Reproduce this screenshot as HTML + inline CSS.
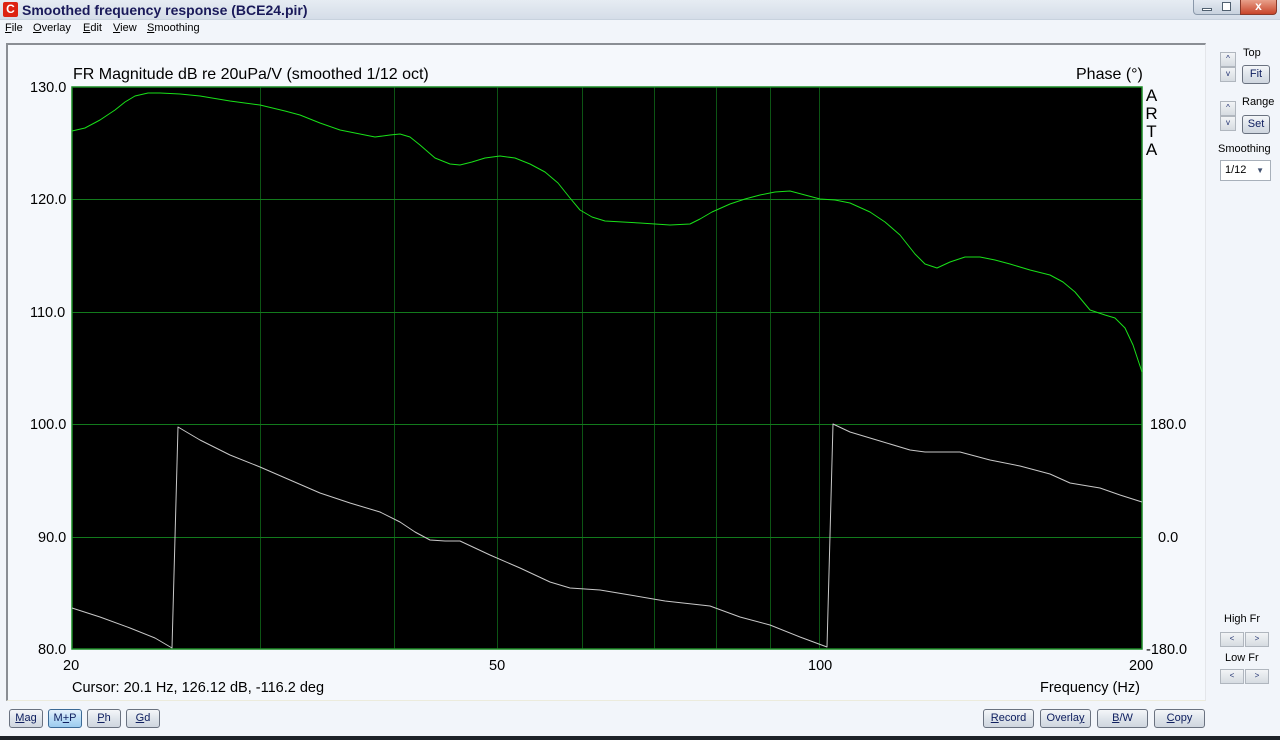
<!DOCTYPE html>
<html><head><meta charset="utf-8"><style>
*{margin:0;padding:0;box-sizing:border-box}
body{width:1280px;height:740px;background:#f2f5fa;font-family:"Liberation Sans",sans-serif;position:relative;overflow:hidden}
.a{position:absolute;white-space:nowrap}
.btn{position:absolute;height:19px;border:1px solid #6a7280;border-radius:3px;background:linear-gradient(#f4f6f9,#dde3ea 55%,#cfd6df);font-size:11px;color:#102060;text-align:center;line-height:17px}
.btnb{background:linear-gradient(#e6f2fc,#b8dcf6 55%,#9ccbee);border-color:#3c6a96}
.spin{position:absolute;width:16px;height:15px;border:1px solid #b0b6be;background:linear-gradient(#f2f4f6,#d6dbe1);font-size:8px;color:#203070;text-align:center;line-height:12px}
.lbl{font-size:14.5px;color:#000}
.big{font-size:16px;color:#000}
.sm{font-size:11px;color:#000}
</style></head><body>
<div class="a" style="left:0;top:0;width:1280px;height:19px;background:linear-gradient(#e6ecf3,#d5dde8)"></div>
<div class="a" style="left:3px;top:2px;width:15px;height:15px;background:#d21;border-radius:2px;color:#fff;font-size:12px;font-weight:bold;line-height:15px;text-align:center">C</div>
<div class="a" style="left:22px;top:2px;font-size:14px;font-weight:bold;color:#1a1a5a">Smoothed frequency response (BCE24.pir)</div>
<div class="a" style="left:1193px;top:0;width:48px;height:15px;border:1px solid #8a98aa;border-top:none;border-radius:0 0 0 4px;background:linear-gradient(#e4eaf2,#c8d2de)"></div>
<div class="a" style="left:1202px;top:8px;width:10px;height:3px;border:1px solid #506070;background:#fff"></div>
<div class="a" style="left:1222px;top:2px;width:9px;height:9px;border:1px solid #506070;background:#fff"></div>
<div class="a" style="left:1240px;top:0;width:37px;height:15px;border:1px solid #8a3a2a;border-top:none;border-radius:0 0 4px 0;background:linear-gradient(#e8a08a,#c8452a);color:#fff;font-size:12px;font-weight:bold;text-align:center;line-height:13px">x</div>
<div class="a" style="left:0;top:19px;width:1280px;height:1px;background:#c8d2de"></div>
<div class="a sm" style="left:5px;top:22px"><u>F</u>ile</div>
<div class="a sm" style="left:33px;top:22px"><u>O</u>verlay</div>
<div class="a sm" style="left:83px;top:22px"><u>E</u>dit</div>
<div class="a sm" style="left:113px;top:22px"><u>V</u>iew</div>
<div class="a sm" style="left:147px;top:22px"><u>S</u>moothing</div>
<div class="a" style="left:6px;top:43px;width:1200px;height:658px;border-left:2px solid #8a8e94;border-top:2px solid #8a8e94;border-right:1px solid #e4e6ea;border-bottom:1px solid #ecebdc;background:#f5f8fc"></div>
<svg class="a" style="left:0;top:0" width="1280" height="740">
<rect x="72" y="87" width="1070" height="562" fill="#000"/>
<g stroke="#0c5414" stroke-width="1">
<line x1="260.5" y1="87" x2="260.5" y2="649"/><line x1="394.5" y1="87" x2="394.5" y2="649"/><line x1="497.5" y1="87" x2="497.5" y2="649"/><line x1="582.5" y1="87" x2="582.5" y2="649"/><line x1="654.5" y1="87" x2="654.5" y2="649"/><line x1="716.5" y1="87" x2="716.5" y2="649"/><line x1="770.5" y1="87" x2="770.5" y2="649"/><line x1="819.5" y1="87" x2="819.5" y2="649"/>
</g>
<g stroke="#127a1c" stroke-width="1">
<line x1="72" y1="199.5" x2="1142" y2="199.5"/><line x1="72" y1="312.5" x2="1142" y2="312.5"/><line x1="72" y1="424.5" x2="1142" y2="424.5"/><line x1="72" y1="537.5" x2="1142" y2="537.5"/>
</g>
<rect x="72" y="87" width="1070" height="562" fill="none" stroke="#1a8a24" stroke-width="1.5"/>
<polyline fill="none" stroke="#19e019" stroke-width="1" stroke-linejoin="round" points="72,131 85,128 100,120 115,110 125,102 135,96 148,93 160,93 180,94 200,96 230,101 260,105 285,111 300,115 320,123 340,130 360,134 375,137 390,135 400,134 410,137 420,145 435,158 450,164 460,165 472,162 485,158 500,156 515,158 530,164 545,172 558,183 570,198 580,210 592,217 605,221 640,223 670,225 690,224 700,219 712,212 730,204 745,199 760,195 775,192 790,191 805,195 820,199 835,200 850,203 870,212 885,222 900,235 915,254 925,264 937,268 950,262 965,257 980,257 995,260 1010,264 1030,270 1050,275 1063,282 1075,292 1090,310 1105,315 1115,318 1125,328 1133,345 1142,372"/>
<polyline fill="none" stroke="#c8c8c8" stroke-width="1" stroke-linejoin="round" points="72,608 100,617 130,628 155,638 172,648 178,427 200,440 230,455 260,467 290,480 320,493 350,503 380,512 400,522 415,532 430,540 445,541 460,541 490,555 520,568 550,582 570,588 600,590 630,595 665,601 710,606 740,617 770,625 800,637 827,647 833,424 850,432 880,441 910,450 925,452 960,452 990,460 1020,466 1050,474 1070,483 1100,488 1120,495 1142,502"/>
</svg>
<div class="a big" style="left:73px;top:66px">FR Magnitude dB re 20uPa/V (smoothed 1/12 oct)</div>
<div class="a big" style="left:1076px;top:66px">Phase (°)</div>
<div class="a big" style="left:1145px;top:87px;line-height:18px;font-size:17px;text-align:center;width:13px">A<br>R<br>T<br>A</div>
<div class="a lbl" style="left:30px;top:80px">130.0</div>
<div class="a lbl" style="left:30px;top:192px">120.0</div>
<div class="a lbl" style="left:30px;top:305px">110.0</div>
<div class="a lbl" style="left:30px;top:417px">100.0</div>
<div class="a lbl" style="left:38px;top:530px">90.0</div>
<div class="a lbl" style="left:38px;top:642px">80.0</div>
<div class="a lbl" style="left:1150px;top:417px">180.0</div>
<div class="a lbl" style="left:1158px;top:530px">0.0</div>
<div class="a lbl" style="left:1146px;top:642px">-180.0</div>
<div class="a lbl" style="left:63px;top:658px">20</div>
<div class="a lbl" style="left:489px;top:658px">50</div>
<div class="a lbl" style="left:808px;top:658px">100</div>
<div class="a lbl" style="left:1129px;top:658px">200</div>
<div class="a lbl" style="left:72px;top:680px">Cursor: 20.1 Hz, 126.12 dB, -116.2 deg</div>
<div class="a lbl" style="left:1040px;top:680px">Frequency (Hz)</div>
<div class="spin" style="left:1220px;top:52px">^</div><div class="spin" style="left:1220px;top:67px">v</div>
<div class="a sm" style="left:1243px;top:47px">Top</div>
<div class="btn" style="left:1242px;top:65px;width:28px">Fit</div>
<div class="spin" style="left:1220px;top:101px">^</div><div class="spin" style="left:1220px;top:116px">v</div>
<div class="a sm" style="left:1242px;top:96px">Range</div>
<div class="btn" style="left:1242px;top:115px;width:28px">Set</div>
<div class="a sm" style="left:1218px;top:143px">Smoothing</div>
<div class="a" style="left:1220px;top:160px;width:51px;height:21px;border:1px solid #a8b0ba;background:#fff;font-size:11px;line-height:19px;padding-left:4px">1/12<span style="position:absolute;right:6px;top:0;font-size:8px;color:#405070">▼</span></div>
<div class="a sm" style="left:1224px;top:613px">High Fr</div>
<div class="spin" style="left:1220px;top:632px;width:24px">&lt;</div><div class="spin" style="left:1245px;top:632px;width:24px">&gt;</div>
<div class="a sm" style="left:1225px;top:652px">Low Fr</div>
<div class="spin" style="left:1220px;top:669px;width:24px">&lt;</div><div class="spin" style="left:1245px;top:669px;width:24px">&gt;</div>
<div class="btn" style="left:9px;top:709px;width:34px"><u>M</u>ag</div>
<div class="btn btnb" style="left:48px;top:709px;width:34px">M<u>+</u>P</div>
<div class="btn" style="left:87px;top:709px;width:34px"><u>P</u>h</div>
<div class="btn" style="left:126px;top:709px;width:34px"><u>G</u>d</div>
<div class="btn" style="left:983px;top:709px;width:51px"><u>R</u>ecord</div>
<div class="btn" style="left:1040px;top:709px;width:51px">Overla<u>y</u></div>
<div class="btn" style="left:1097px;top:709px;width:51px"><u>B</u>/W</div>
<div class="btn" style="left:1154px;top:709px;width:51px"><u>C</u>opy</div>
<div class="a" style="left:0;top:736px;width:1280px;height:4px;background:#1e2228"></div>
</body></html>
